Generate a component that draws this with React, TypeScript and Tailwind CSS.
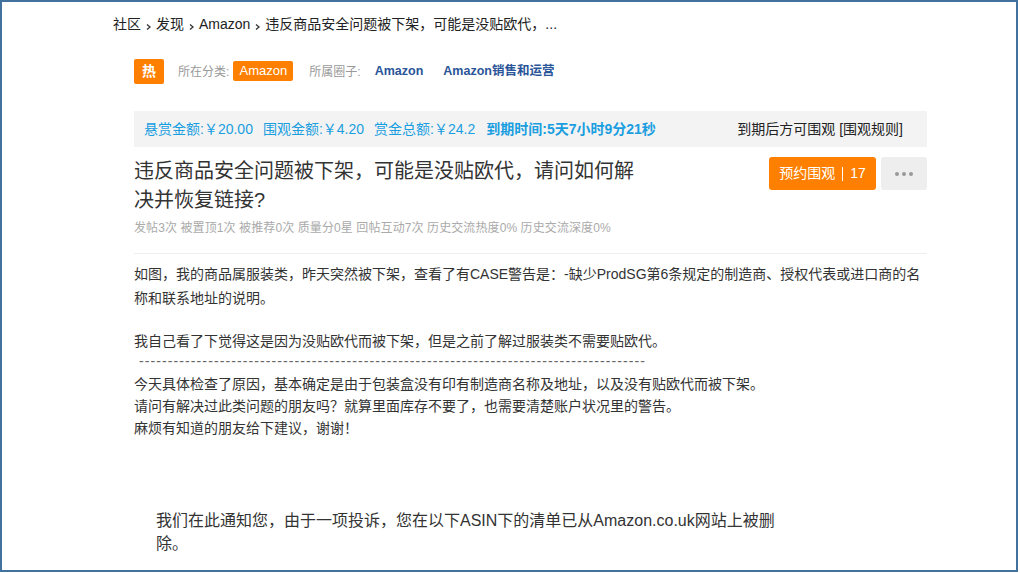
import React from "react";

const FONT = { fontFamily: '"Liberation Sans", "Noto Sans CJK SC", sans-serif' };

function Chev() {
  return (
    <svg width="7" height="8" viewBox="0 0 7 8" className="mx-[4px] mt-[5px]">
      <path d="M2 1.5 L5 4 L2 6.5" fill="none" stroke="#333" strokeWidth="1.3" />
    </svg>
  );
}

export default function App() {
  return (
    <div className="w-[1018px] h-[572px] border-2 border-[#41719c] bg-white overflow-hidden text-[#333]" style={FONT}>
      <div className="pl-[111px] pt-[12px]">
        {/* breadcrumb */}
        <div className="flex items-center h-[20px] text-[14px] text-[#222] leading-[20px]">
          <span>社区</span>
          <Chev />
          <span>发现</span>
          <Chev />
          <span>Amazon</span>
          <Chev />
          <span>违反商品安全问题被下架，可能是没贴欧代，...</span>
        </div>

        <div className="ml-[21px] w-[793px]">
          {/* category row */}
          <div className="mt-[25px] flex items-center h-[25px]">
            <span className="w-[30px] h-[25px] bg-[#ff8000] rounded-[2px] text-white text-[14px] font-bold flex items-center justify-center">热</span>
            <span className="ml-[14px] text-[12px] text-[#999]">所在分类:</span>
            <span className="ml-[4px] mb-[2px] w-[60px] h-[20px] bg-[#ff8000] rounded-[2px] text-white text-[13px] flex items-center justify-center">Amazon</span>
            <span className="ml-[16px] text-[12px] text-[#999]">所属圈子:</span>
            <span className="ml-[14px] text-[12.5px] font-bold text-[#2a5598]">Amazon</span>
            <span className="ml-[20px] text-[12.5px] font-bold text-[#2a5598]">Amazon销售和运营</span>
          </div>

          {/* reward bar */}
          <div className="mt-[27px] h-[36px] bg-[#f3f3f3] flex items-center justify-between pl-[10px] pr-[24px] text-[14px]">
            <div className="flex items-center text-[#1a9ee0]">
              <span>悬赏金额:￥20.00</span>
              <span className="ml-[10px]">围观金额:￥4.20</span>
              <span className="ml-[10px]">赏金总额:￥24.2</span>
              <span className="ml-[11px] font-bold">到期时间:5天7小时9分21秒</span>
            </div>
            <div className="text-[#222]">到期后方可围观 [围观规则]</div>
          </div>

          {/* title row */}
          <div className="mt-[10px] flex justify-between items-start">
            <h1 className="w-[515px] text-[20px] leading-[29px] text-[#333] font-normal">
              违反商品安全问题被下架，可能是没贴欧代，请问如何解决并恢复链接?
            </h1>
            <div className="flex gap-[5px]">
              <button className="w-[107px] h-[33px] bg-[#ff8000] rounded-[3px] text-white text-[14px] flex items-center justify-center">
                <span>预约围观</span>
                <span className="mx-[7px] w-px h-[14px] bg-white"></span>
                <span>17</span>
              </button>
              <button className="w-[46px] h-[33px] bg-[#eeeeee] rounded-[3px] flex items-center justify-center gap-[3px]">
                <span className="w-[4px] h-[4px] rounded-full bg-[#999]"></span>
                <span className="w-[4px] h-[4px] rounded-full bg-[#999]"></span>
                <span className="w-[4px] h-[4px] rounded-full bg-[#999]"></span>
              </button>
            </div>
          </div>

          {/* stats */}
          <div className="mt-[4px] text-[12px] leading-[18px] text-[#aaa] tracking-[0.1px]">
            发帖3次 被置顶1次 被推荐0次 质量分0星 回帖互动7次 历史交流热度0% 历史交流深度0%
          </div>

          <div className="mt-[16px] h-px bg-[#eeeeee]"></div>

          {/* body */}
          <div className="mt-[8px] text-[14px] text-[#333]">
            <p className="leading-[24px]">
              如图，我的商品属服装类，昨天突然被下架，查看了有CASE警告是：-缺少ProdSG第6条规定的制造商、授权代表或进口商的名称和联系地址的说明。
            </p>
            <p className="mt-[20px] leading-[22px]">我自己看了下觉得这是因为没贴欧代而被下架，但是之前了解过服装类不需要贴欧代。</p>
            <p className="leading-[18px] text-[#666] whitespace-pre tracking-[1.1px]">{" " + "-".repeat(88)}</p>
            <p className="mt-[3px] leading-[22px]">
              今天具体检查了原因，基本确定是由于包装盒没有印有制造商名称及地址，以及没有贴欧代而被下架。
              <br />
              请问有解决过此类问题的朋友吗？就算里面库存不要了，也需要清楚账户状况里的警告。
              <br />
              麻烦有知道的朋友给下建议，谢谢！
            </p>
          </div>

          <p className="mt-[70px] ml-[22px] w-[625px] text-[16px] leading-[23px] text-[#333]">
            我们在此通知您，由于一项投诉，您在以下ASIN下的清单已从Amazon.co.uk网站上被删除。
          </p>
        </div>
      </div>
    </div>
  );
}
